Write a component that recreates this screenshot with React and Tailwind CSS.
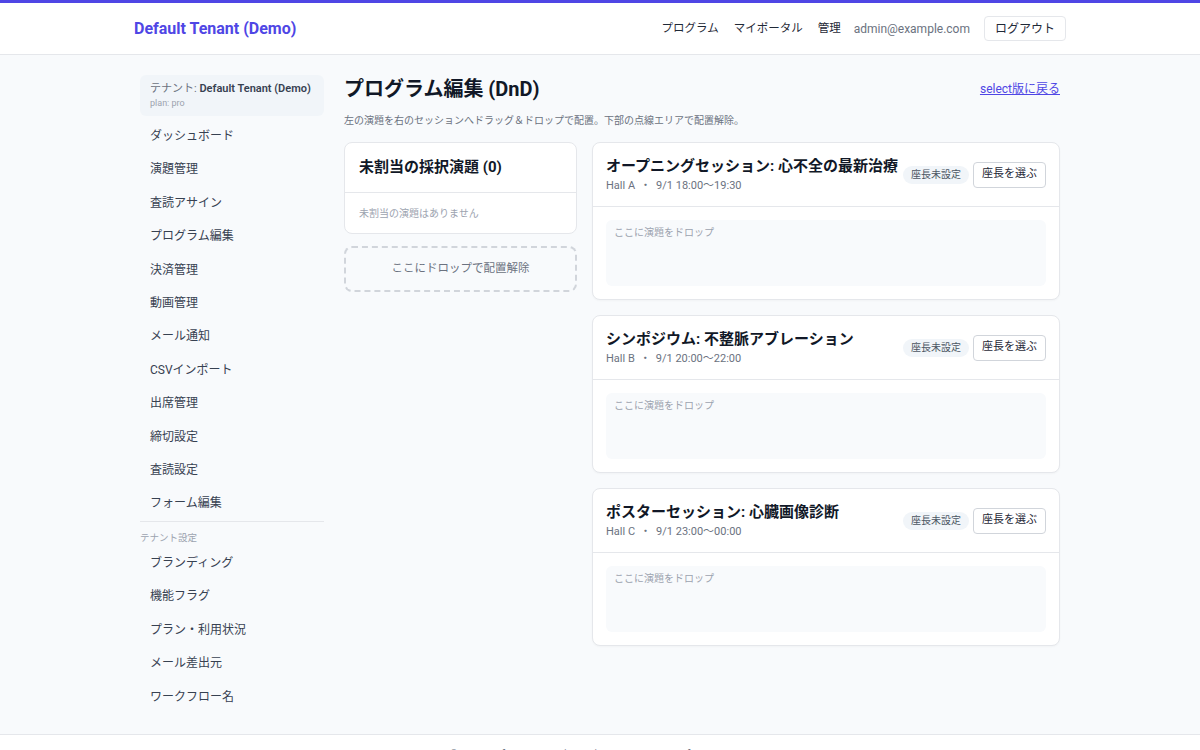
import React from "react";

const font = { fontFamily: '"Roboto", "Noto Sans CJK JP", sans-serif' };

const mainNav = [
  "ダッシュボード",
  "演題管理",
  "査読アサイン",
  "プログラム編集",
  "決済管理",
  "動画管理",
  "メール通知",
  "CSVインポート",
  "出席管理",
  "締切設定",
  "査読設定",
  "フォーム編集",
];

const tenantNav = ["ブランディング", "機能フラグ", "プラン・利用状況", "メール差出元", "ワークフロー名"];

const sessions = [
  { title: "オープニングセッション: 心不全の最新治療", hall: "Hall A", time: "9/1 18:00〜19:30" },
  { title: "シンポジウム: 不整脈アブレーション", hall: "Hall B", time: "9/1 20:00〜22:00" },
  { title: "ポスターセッション: 心臓画像診断", hall: "Hall C", time: "9/1 23:00〜00:00" },
];

const Header = () => (
  <header className="bg-white border-t-[3px] border-[#4f46e5] border-b border-b-[#e5e7eb]">
    <div className="w-[932px] mx-auto h-[51px] flex items-center justify-between">
      <a className="text-[16px] font-bold text-[#4f46e5]">Default Tenant (Demo)</a>
      <nav className="flex items-center text-[11.5px] text-[#1f2937] whitespace-nowrap">
        <a className="mr-[15px]">プログラム</a>
        <a className="mr-[15px]">マイポータル</a>
        <a className="mr-[13px]">管理</a>
        <span className="text-[12px] text-[#6b7280] mr-[14px]">admin@example.com</span>
        <button className="h-[25px] px-[10px] text-[12px] border border-[#e5e7eb] rounded bg-white text-[#1f2937]">ログアウト</button>
      </nav>
    </div>
  </header>
);

const Sidebar = () => (
  <aside className="w-[184px] shrink-0">
    <div className="bg-[#f1f5f9] rounded-md px-[10px] py-[6px] mb-[4px]">
      <div className="text-[11px] leading-[15px] text-[#6b7280] whitespace-nowrap">
        テナント: <span className="font-semibold text-[#374151]">Default Tenant (Demo)</span>
      </div>
      <div className="text-[9px] leading-[13px] mt-[1px] text-[#9ca3af]">plan: pro</div>
    </div>
    {mainNav.map((n) => (
      <div key={n} className="px-[10px] py-2 text-[12px] leading-[17.4px] text-[#374151]">{n}</div>
    ))}
    <div className="border-t border-[#e5e7eb]" />
    <div className="text-[9.5px] leading-[14px] text-[#9ca3af] pt-[9px]">テナント設定</div>
    <div className="pt-[2px]">
      {tenantNav.map((n) => (
        <div key={n} className="px-[10px] py-2 text-[12px] leading-[17.4px] text-[#374151]">{n}</div>
      ))}
    </div>
  </aside>
);

const SessionCard = ({ s }) => (
  <div className="bg-white border border-[#e5e7eb] rounded-lg shadow-[0_1px_2px_rgba(0,0,0,0.03)]">
    <div className="flex items-center justify-between px-[13px] pt-[12px] pb-[12px] border-b border-[#e5e7eb]">
      <div className="whitespace-nowrap min-w-0">
        <div className="text-[15px] leading-[22px] font-bold text-[#111827]">{s.title}</div>
        <div className="text-[11px] leading-[16px] text-[#6b7280] mt-[1px]">
          {s.hall}<span className="mx-[5px]">・</span>{s.time}
        </div>
      </div>
      <div className="flex items-center gap-[4px] whitespace-nowrap">
        <span className="text-[10px] leading-[14px] px-[8px] py-[2px] rounded-full bg-[#f1f5f9] text-[#4b5563]">座長未設定</span>
        <button className="h-[26px] px-[8px] text-[11px] border border-[#d1d5db] rounded bg-white text-[#1f2937]">座長を選ぶ</button>
      </div>
    </div>
    <div className="p-[13px]">
      <div className="h-[66px] bg-[#f8fafc] rounded-md px-[8px] py-[5px] text-[10px] text-[#9ca3af]">ここに演題をドロップ</div>
    </div>
  </div>
);

const Main = () => (
  <main className="flex-1 min-w-0">
    <div className="flex items-center justify-between">
      <h1 className="text-[20px] leading-[28px] font-bold text-[#111827]">プログラム編集 (DnD)</h1>
      <a className="text-[12px] text-[#4f46e5] underline">select版に戻る</a>
    </div>
    <p className="text-[10px] leading-[14px] text-[#6b7280] mt-[11px]">
      左の演題を右のセッションへドラッグ＆ドロップで配置。下部の点線エリアで配置解除。
    </p>
    <div className="flex gap-[15px] mt-[14px] items-start">
      <div className="w-[233px] shrink-0">
        <div className="bg-white border border-[#e5e7eb] rounded-lg">
          <div className="h-[50px] flex items-center px-[14px] border-b border-[#e5e7eb] text-[15px] font-bold text-[#111827]">
            未割当の採択演題 (0)
          </div>
          <div className="h-[40px] flex items-center px-[14px] text-[10px] text-[#9ca3af]">未割当の演題はありません</div>
        </div>
        <div className="mt-[12px] h-[46px] border-2 border-dashed border-[#d1d5db] rounded-lg flex items-center justify-center text-[11.5px] text-[#6b7280]">
          ここにドロップで配置解除
        </div>
      </div>
      <div className="flex-1 min-w-0 flex flex-col gap-[15px]">
        {sessions.map((s) => (
          <SessionCard key={s.title} s={s} />
        ))}
      </div>
    </div>
  </main>
);

export default function App() {
  return (
    <div style={font} className="min-h-screen bg-[#f8fafc] flex flex-col">
      <Header />
      <div className="w-[920px] mx-auto flex gap-[20px] pt-[20px] pb-[20px]">
        <Sidebar />
        <Main />
      </div>
      <footer className="bg-white border-t border-[#e5e7eb] py-[12px] text-center text-[11px] text-[#6b7280]">
        © 2025 Default Tenant (Demo) · Powered by Conference Suite
      </footer>
    </div>
  );
}
